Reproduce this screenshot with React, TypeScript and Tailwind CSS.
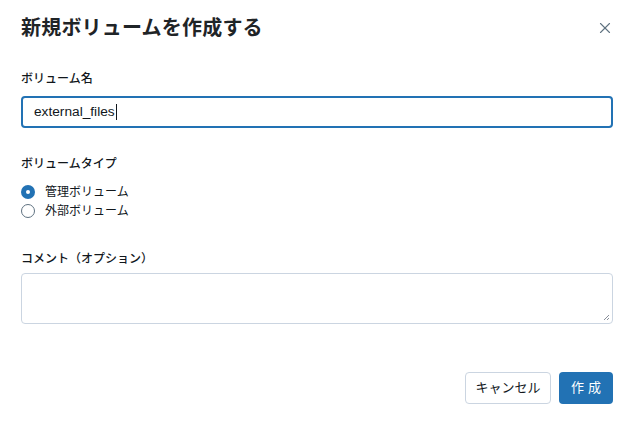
import { X } from "lucide-react";

const font = {
  fontFamily: '"Liberation Sans", "Noto Sans CJK JP", sans-serif',
};

export default function App() {
  return (
    <div
      className="w-[631px] h-[423px] bg-white text-[#11171c] pl-[21px] pr-[18px] pt-[14px] flex flex-col"
      style={font}
    >
      {/* Header */}
      <div className="flex items-center justify-between h-[28px]">
        <h1 className="text-[20px] font-bold tracking-[0.2px] text-[#1f2427]">
          新規ボリュームを作成する
        </h1>
        <button className="text-[#5f7281] mr-[-1px]">
          <X size={18} strokeWidth={1.5} />
        </button>
      </div>

      {/* Name */}
      <label className="mt-[29px] text-[12px] font-medium leading-[16px]">
        ボリューム名
      </label>
      <div className="mt-[9px] h-[32px] w-full rounded-[4px] border-2 border-[#2272b4] flex items-center px-[11px] text-[13.7px] text-[#11171c]">
        external_files
        <span className="w-px h-[16px] bg-[#11171c] ml-px" />
      </div>

      {/* Type */}
      <div className="mt-[28px] text-[12px] font-medium leading-[16px]">
        ボリュームタイプ
      </div>
      <div className="mt-[13px] flex flex-col gap-[5px] text-[12px] leading-[14px]">
        <div className="flex items-center gap-[10px]">
          <span className="w-[14px] h-[14px] rounded-full bg-[#2272b4] flex items-center justify-center">
            <span className="w-[4px] h-[4px] rounded-full bg-white" />
          </span>
          <span>管理ボリューム</span>
        </div>
        <div className="flex items-center gap-[10px]">
          <span className="w-[14px] h-[14px] rounded-full border border-[#5f7281] bg-white" />
          <span>外部ボリューム</span>
        </div>
      </div>

      {/* Comment */}
      <div className="mt-[33px] text-[12px] font-medium leading-[16px]">
        コメント（オプション）
      </div>
      <div className="relative mt-[6px] h-[51px] w-full rounded-[4px] border border-[#cbd5e1]">
        <svg
          className="absolute right-[2px] bottom-[2px]"
          width="7"
          height="7"
          viewBox="0 0 7 7"
        >
          <path d="M6 1 L1 6 M6 4 L4 6" stroke="#6b7280" strokeWidth="0.8" />
        </svg>
      </div>

      {/* Footer */}
      <div className="mt-[48px] flex justify-end gap-[8px]">
        <button className="h-[32px] w-[86px] rounded-[4px] border border-[#cbd5e1] bg-white text-[13px] text-[#11171c]">
          キャンセル
        </button>
        <button className="h-[32px] w-[54px] rounded-[4px] bg-[#2272b4] text-[13px] text-white tracking-[4px] pl-[4px]">
          作成
        </button>
      </div>
    </div>
  );
}
